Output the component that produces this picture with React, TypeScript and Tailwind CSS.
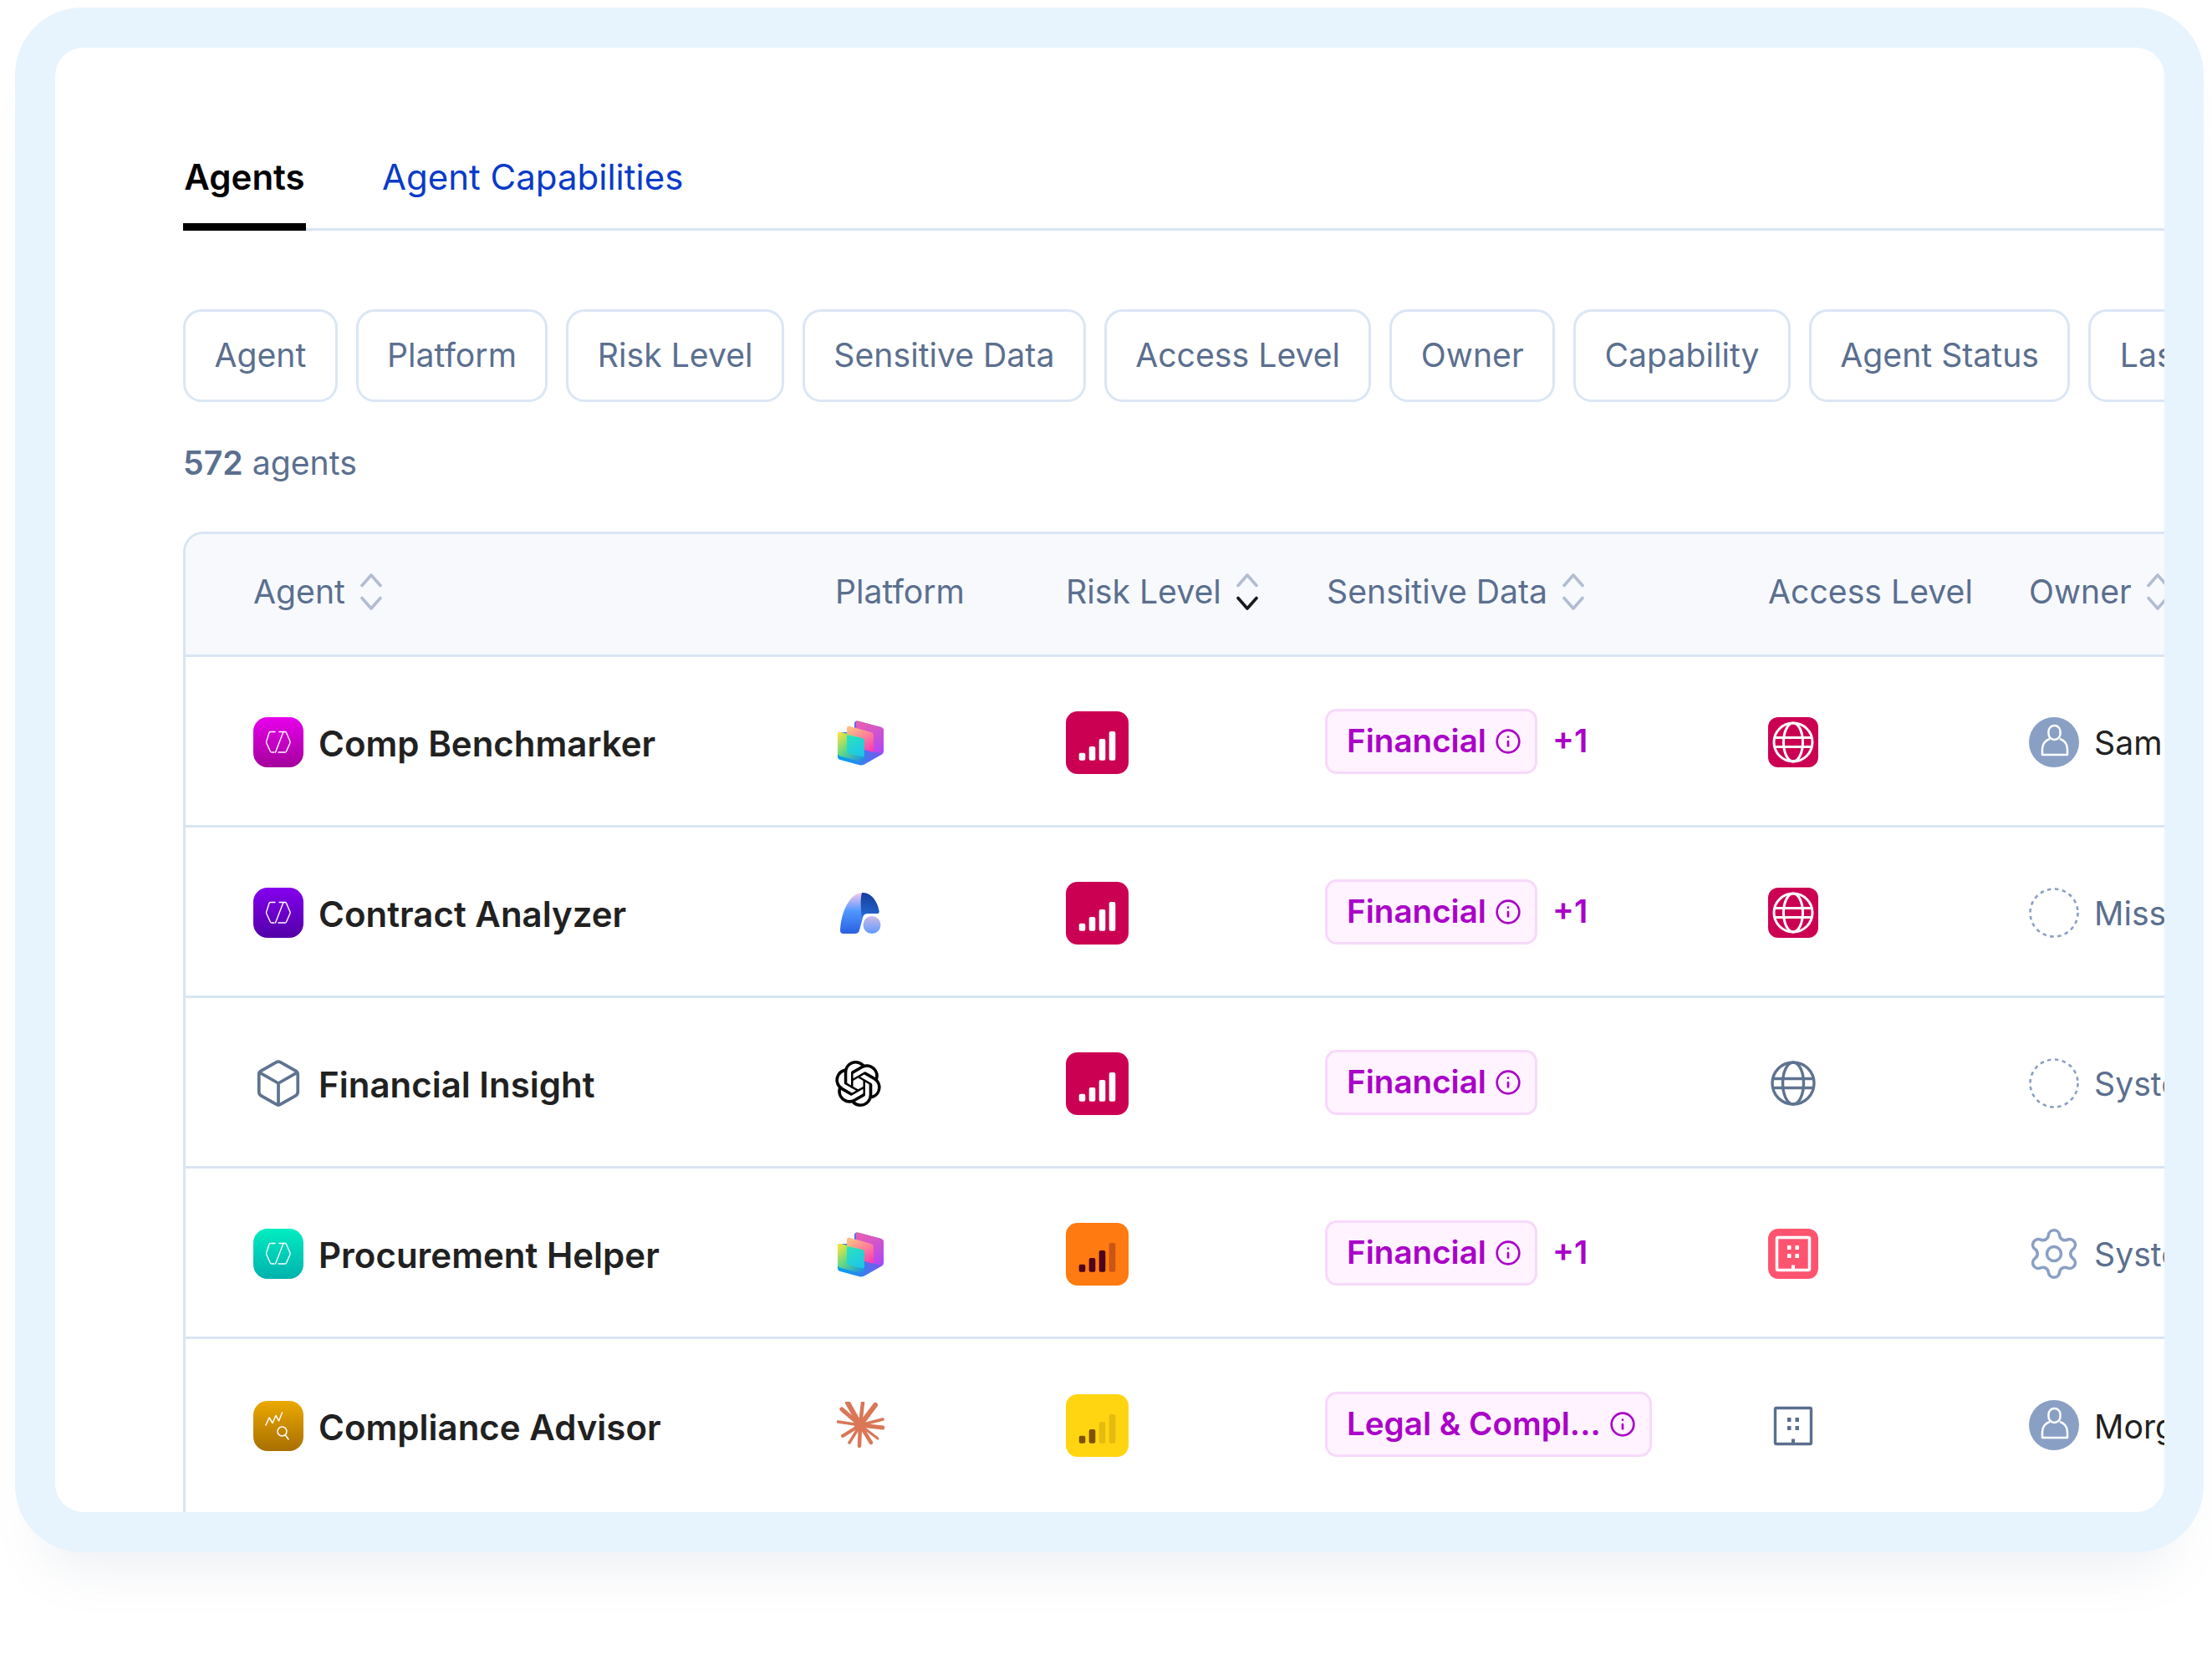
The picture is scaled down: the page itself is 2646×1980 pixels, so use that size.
import React from "react";
import { Info, Box, Settings } from "lucide-react";
import { SiOpenai } from "react-icons/si";

const muted = "text-[#5b6f8f]";

function Chevrons({ active }: { active?: boolean }) {
  return (
    <svg width="26" height="44" viewBox="0 0 26 44" fill="none" strokeWidth="3.6" strokeLinecap="round" strokeLinejoin="round" className="shrink-0">
      <path d="M2 14.5 13 2 24 14.5" stroke="#b3bdd0" />
      <path d="M2 29.5 13 42 24 29.5" stroke={active ? "#1a1a1a" : "#b3bdd0"} />
    </svg>
  );
}

function AgentGlyph() {
  return (
    <svg width="60" height="60" viewBox="0 0 60 60" fill="none" stroke="#fff" strokeWidth="1.4" strokeLinejoin="round" strokeLinecap="round">
      <path d="M26 17.5h-5.5q-1 0-1.5 1L15.7 29q-.4 1 .1 2l4.6 10q.5 1 1.6 1H25" />
      <path d="M26.5 42 36 17.5" />
      <path d="M31 17.5h7q1 0 1.5 1L44 29q.4 1-.1 2l-4.4 10q-.5 1-1.5 1H30" />
    </svg>
  );
}

function ChartGlyph() {
  return (
    <svg width="60" height="60" viewBox="0 0 60 60" fill="none" stroke="#fff" strokeWidth="1.5" strokeLinejoin="round" strokeLinecap="round">
      <path d="M15 29l4-9 4 6.500 4-9 3.500 6.500 4-10" />
      <circle cx="34.500" cy="36.500" r="5.500" />
      <path d="M38.500 41l3.500 5" />
    </svg>
  );
}

function AgentIcon({ kind }: { kind: string }) {
  if (kind === "cube") {
    return (
      <div className="w-[60px] h-[60px] flex items-center justify-center shrink-0">
        <Box size={62} strokeWidth={1.45} color="#5f7391" className="shrink-0" />
      </div>
    );
  }
  const bg =
    kind === "magenta"
      ? "bg-gradient-to-b from-[#e800ec] to-[#a3009c]"
      : kind === "violet"
        ? "bg-gradient-to-b from-[#8500ee] to-[#5200a8]"
        : kind === "teal"
          ? "bg-gradient-to-b from-[#00edc0] to-[#00b2ad]"
          : "bg-gradient-to-b from-[#eca900] to-[#a86f00]";
  return (
    <div className={`w-[60px] h-[60px] rounded-[17px] shrink-0 ${bg}`}>
      {kind === "gold" ? <ChartGlyph /> : <AgentGlyph />}
    </div>
  );
}

function CopilotLogo() {
  return (
    <svg width="55" height="55" viewBox="0 0 55 55" fill="none" className="ml-[3px]">
      <defs>
        <linearGradient id="cpBack" x1="30" y1="0" x2="50" y2="40" gradientUnits="userSpaceOnUse">
          <stop offset="0" stopColor="#ea5fae" />
          <stop offset="1" stopColor="#b047f5" />
        </linearGradient>
        <linearGradient id="cpBase" x1="10" y1="52" x2="50" y2="34" gradientUnits="userSpaceOnUse">
          <stop offset="0" stopColor="#0a9cf0" />
          <stop offset="1" stopColor="#7a55ee" />
        </linearGradient>
        <linearGradient id="cpMid" x1="20" y1="8" x2="38" y2="38" gradientUnits="userSpaceOnUse">
          <stop offset="0" stopColor="#ffbb85" />
          <stop offset="1" stopColor="#fb3fb0" />
        </linearGradient>
        <linearGradient id="cpFront" x1="0" y1="18" x2="30" y2="52" gradientUnits="userSpaceOnUse">
          <stop offset="0" stopColor="#f7e33c" />
          <stop offset="0.45" stopColor="#5ed889" />
          <stop offset="1" stopColor="#0e8bf2" />
        </linearGradient>
        <linearGradient id="cpTeal" x1="14" y1="20" x2="30" y2="44" gradientUnits="userSpaceOnUse">
          <stop offset="0" stopColor="#2ae0c0" />
          <stop offset="1" stopColor="#1cc4ea" />
        </linearGradient>
      </defs>
      <path d="M24 1.500 52 9q3 1 3 4v24q0 3-2 4.500L32 53.500q-3 1.500-6 .8L3 48q-3-1-3-4V18q0-3 3-3h17V5q0-4 4-3.500z" fill="url(#cpBase)" />
      <path d="M24 1.500 52 9q3 1 3 4v24q0 2-3 3.500L40 38 22 20V5q0-4 2-3.500z" fill="url(#cpBack)" />
      <path d="M14 7.800 40 15q3 .8 3 4v17q0 3-3 2.300L14 31q-3-.8-3-4V11q0-4 3-3.200z" fill="url(#cpMid)" />
      <path d="M4 15l25 7q3 .8 3 4v18q0 3-3 4.500l-3 1.500-22-6q-4-1-4-4V18q0-4 4-3z" fill="url(#cpFront)" />
      <path d="M11 18.200 29 22q3 .8 3 4v16q0 3-3 2.300L14 40.500q-3-.8-3-4z" fill="url(#cpTeal)" />
    </svg>
  );
}

function FoundryLogo() {
  return (
    <svg width="55" height="55" viewBox="0 0 55 55" fill="none" className="ml-[3px]">
      <defs>
        <linearGradient id="fdMain" x1="20" y1="3" x2="20" y2="52" gradientUnits="userSpaceOnUse">
          <stop offset="0" stopColor="#f8c9ec" />
          <stop offset="0.45" stopColor="#4e97ff" />
          <stop offset="1" stopColor="#2a5fe0" />
        </linearGradient>
        <linearGradient id="fdDark" x1="40" y1="3" x2="36" y2="30" gradientUnits="userSpaceOnUse">
          <stop offset="0" stopColor="#153c9c" />
          <stop offset="1" stopColor="#2464cc" />
        </linearGradient>
        <linearGradient id="fdDot" x1="41" y1="31" x2="41" y2="52" gradientUnits="userSpaceOnUse">
          <stop offset="0" stopColor="#cdb9e6" />
          <stop offset="1" stopColor="#5f9bff" />
        </linearGradient>
      </defs>
      <path d="M30 3c-15 0-26 22-27 45q0 4 4 4h13q5 0 6-4l4-15q1-5 6-5H47q3 0 2.500-3C48 14 40 3 30 3z" fill="url(#fdMain)" />
      <path d="M29 3.100c11-1 19 11 20.500 21.900q.5 3-2.500 3H35q-5 0-6 6c-1.500-13-2-24 0-30.900z" fill="url(#fdDark)" />
      <circle cx="41" cy="41.500" r="10.500" fill="url(#fdDot)" />
    </svg>
  );
}

function ClaudeLogo() {
  const rays: [number, number, number][] = [
    [13, 1, 6], [31, 1, 4.500], [46, 4, 6], [55, 21, 3.500], [55, 31, 5],
    [49, 44, 3], [41, 49, 4.500], [27, 53, 4.500], [15, 49, 3.500], [7, 41, 4], [1.500, 24, 3.500], [6, 9, 5],
  ];
  return (
    <svg width="57" height="57" viewBox="0 0 57 57" fill="none" stroke="#d97757" strokeLinecap="round" className="ml-[2px]">
      {rays.map(([x, y, w], i) => (
        <line key={i} x1="28" y1="28" x2={x} y2={y} strokeWidth={w} />
      ))}
      <circle cx="28" cy="28" r="7" fill="#d97757" stroke="none" />
    </svg>
  );
}

function Platform({ kind }: { kind: string }) {
  if (kind === "copilot") return <CopilotLogo />;
  if (kind === "foundry") return <FoundryLogo />;
  if (kind === "openai") return <SiOpenai size={55} color="#000" />;
  return <ClaudeLogo />;
}

function Risk({ level }: { level: string }) {
  const cfg =
    level === "high"
      ? { bg: "bg-[#cc0052]", c: ["#fff", "#fff", "#fff", "#fff"] }
      : level === "med"
        ? { bg: "bg-[#ff7a10]", c: ["#4d0020", "#4d0020", "#4d0020", "#c95614"] }
        : { bg: "bg-[#ffd512]", c: ["#7f5200", "#7f5200", "#e6bb10", "#e6bb10"] };
  return (
    <div className={`w-[75px] h-[75px] rounded-[14px] ${cfg.bg}`}>
      <svg width="75" height="75" viewBox="0 0 75 75">
        <rect x="15.700" y="49.700" width="7.600" height="9" rx="2" fill={cfg.c[0]} />
        <rect x="27.700" y="42" width="7.600" height="16.700" rx="2" fill={cfg.c[1]} />
        <rect x="39.700" y="33" width="7.600" height="25.700" rx="2" fill={cfg.c[2]} />
        <rect x="51.700" y="24" width="7.600" height="34.700" rx="2" fill={cfg.c[3]} />
      </svg>
    </div>
  );
}

function Globe({ color, r, sw }: { color: string; r: number; sw: number }) {
  return (
    <svg width="60" height="60" viewBox="0 0 60 60" fill="none" stroke={color} strokeWidth={sw}>
      <circle cx="30" cy="30" r={r} />
      <ellipse cx="30" cy="30" rx={r * 0.5} ry={r} />
      <path d={`M${30 - r + 1} 24.500H${30 + r - 1}M${30 - r + 1} 35.500H${30 + r - 1}`} />
    </svg>
  );
}

function Building({ color, s, sw }: { color: string; s: number; sw: number }) {
  const a = 30 - s / 2;
  const b = 30 + s / 2;
  return (
    <svg width="60" height="60" viewBox="0 0 60 60" fill="none">
      <rect x={a} y={a} width={s} height={s} rx="1.500" stroke={color} strokeWidth={sw} />
      <g fill={color}>
        <rect x="23" y="20" width="4.500" height="5" />
        <rect x="32.500" y="20" width="4.500" height="5" />
        <rect x="23" y="30" width="4.500" height="5" />
        <rect x="32.500" y="30" width="4.500" height="5" />
        <rect x="28" y={b - 6} width="4" height="5" />
      </g>
    </svg>
  );
}

function Access({ kind }: { kind: string }) {
  if (kind === "globeRed")
    return (
      <div className="w-[60px] h-[60px] rounded-[12px] bg-[#cc0052]">
        <Globe color="#fff" r={23} sw={3} />
      </div>
    );
  if (kind === "globe") return <Globe color="#5f7391" r={25} sw={3.4} />;
  if (kind === "buildingRed")
    return (
      <div className="w-[60px] h-[60px] rounded-[12px] bg-[#ff5470]">
        <Building color="#fff" s={39} sw={3.500} />
      </div>
    );
  return <Building color="#5b6f8f" s={43} sw={3.400} />;
}

function OwnerIcon({ kind }: { kind: string }) {
  if (kind === "user")
    return (
      <div className="w-[60px] h-[60px] rounded-full bg-[#8a9fc4] shrink-0">
        <svg width="60" height="60" viewBox="0 0 60 60" fill="none" stroke="#fff" strokeWidth="2.500" strokeLinejoin="round">
          <rect x="23.500" y="10" width="14" height="17" rx="7" />
          <path d="M25 26c-5 1.500-9 6-9 12v7h30v-7c0-6-4-10.500-9-12" />
        </svg>
      </div>
    );
  if (kind === "gear")
    return (
      <div className="w-[60px] h-[60px] flex items-center justify-center shrink-0">
        <Settings size={68} strokeWidth={1.25} color="#8a9fc4" className="shrink-0" />
      </div>
    );
  return (
    <svg width="60" height="60" viewBox="0 0 60 60" fill="none" className="shrink-0">
      <circle cx="30" cy="30" r="28.500" stroke="#8a9fc4" strokeWidth="2.600" strokeDasharray="4.500 4.500" />
    </svg>
  );
}

function Chip({ label }: { label: string }) {
  return (
    <div className="h-[78px] -ml-[2px] -mt-[3px] rounded-[14px] border-[3px] border-[#f7d9fb] bg-[#fef3fe] pl-[23px] pr-[16px] flex items-center gap-[10px] text-[#aa00c8] text-[38.600px] font-semibold">
      <span>{label}</span>
      <Info size={32} strokeWidth={2} />
    </div>
  );
}

const filters = ["Agent", "Platform", "Risk Level", "Sensitive Data", "Access Level", "Owner", "Capability", "Agent Status", "Last Seen"];

const rows = [
  { a: "magenta", name: "Comp Benchmarker", p: "copilot", r: "high", chip: "Financial", plus: true, ac: "globeRed", o: "user", on: "Sam Carter", dark: true },
  { a: "violet", name: "Contract Analyzer", p: "foundry", r: "high", chip: "Financial", plus: true, ac: "globeRed", o: "dash", on: "Missing", dark: false },
  { a: "cube", name: "Financial Insight", p: "openai", r: "high", chip: "Financial", plus: false, ac: "globe", o: "dash", on: "System", dark: false },
  { a: "teal", name: "Procurement Helper", p: "copilot", r: "med", chip: "Financial", plus: true, ac: "buildingRed", o: "gear", on: "System", dark: false },
  { a: "gold", name: "Compliance Advisor", p: "claude", r: "low", chip: "Legal & Compl...", plus: false, ac: "building", o: "user", on: "Morgan Lee", dark: true },
];

const grid = "grid grid-cols-[696px_276px_312px_528px_312px_420px] w-[2600px] pl-[81px] items-center";

export default function App() {
  return (
    <div className="w-[2646px] h-[1980px] overflow-hidden bg-white pl-[18px] pt-[9px] font-['Inter',sans-serif]">
      <div className="w-[2618px] h-[1848px] p-[48px] pr-[47px] rounded-[80px] bg-[#e7f4fd] shadow-[0_55px_60px_-35px_rgba(120,140,170,0.13)]">
        <div className="w-[2523px] h-[1752px] rounded-[34px] bg-white overflow-hidden pl-[153px] pt-[94px]">
          <div className="h-[125px] flex items-end gap-[91px] border-b-[3px] border-[#d9e5f3] text-[42px]">
            <div className="h-[125px] -mb-[3px] w-[147px] border-b-[9px] border-black font-semibold text-black text-center pt-[31px] leading-[60px]">Agents</div>
            <div className="h-[125px] -mb-[3px] pt-[31px] leading-[60px] text-[#0a3bc8]">Agent Capabilities</div>
          </div>

          <div className={`mt-[94px] flex gap-[22px] text-[39.200px] ${muted}`}>
            {filters.map((f) => (
              <div key={f} className="h-[111px] px-[34.400px] shrink-0 flex items-center rounded-[22px] border-[3.500px] border-[#dbe6f5] whitespace-nowrap">
                {f}
              </div>
            ))}
          </div>

          <div className={`mt-[43px] h-[60px] leading-[60px] text-[39.200px] ${muted}`}>
            <span className="font-semibold">572</span> agents
          </div>

          <div className="mt-[52px] h-[1200px] border-l-[3px] border-t-[3px] border-[#d9e5f3] rounded-tl-[24px] overflow-hidden">
            <div className={`${grid} h-[147px] pb-[6px] bg-[#f7f9fd] border-b-[3px] border-[#d9e5f3] text-[39.200px] ${muted}`}>
              <div className="flex items-center gap-[18px]">Agent<Chevrons /></div>
              <div>Platform</div>
              <div className="flex items-center gap-[18px]">Risk Level<Chevrons active /></div>
              <div className="flex items-center gap-[18px]">Sensitive Data<Chevrons /></div>
              <div>Access Level</div>
              <div className="flex items-center gap-[18px]">Owner<Chevrons /></div>
            </div>

            {rows.map((r) => (
              <div key={r.name} className={`${grid} h-[204px] pt-[3px] border-b-[3px] last:border-b-0 border-[#d9e5f3]`}>
                <div className="flex items-center gap-[18px]">
                  <AgentIcon kind={r.a} />
                  <span className="mt-[3px] text-[42px] font-semibold text-[#212121] whitespace-nowrap">{r.name}</span>
                </div>
                <div className="flex items-center"><Platform kind={r.p} /></div>
                <div><Risk level={r.r} /></div>
                <div className="flex items-center gap-[18px]">
                  <Chip label={r.chip} />
                  {r.plus && <span className="-mt-[3px] text-[38.600px] font-semibold text-[#aa00c8]">+1</span>}
                </div>
                <div><Access kind={r.ac} /></div>
                <div className="flex items-center gap-[18px]">
                  <OwnerIcon kind={r.o} />
                  <span className={`mt-[3px] text-[39.200px] whitespace-nowrap ${r.dark ? "text-[#212121]" : muted}`}>{r.on}</span>
                </div>
              </div>
            ))}
          </div>
        </div>
      </div>
    </div>
  );
}
